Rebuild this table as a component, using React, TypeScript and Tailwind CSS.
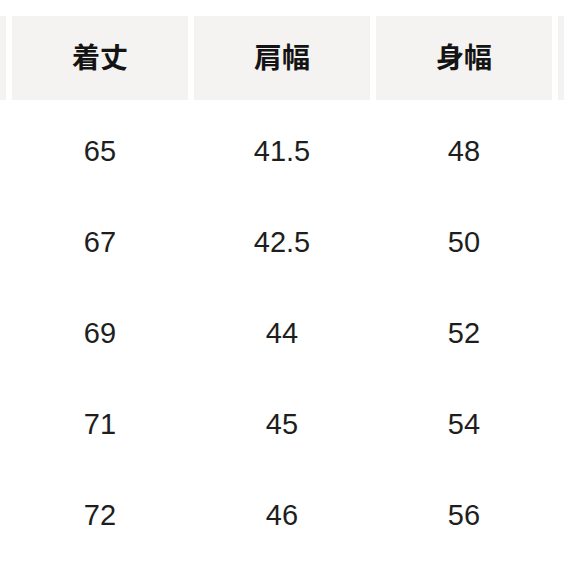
import React from "react";

const headers = ["", "着丈", "肩幅", "身幅", ""];

const rows = [
  ["", "65", "41.5", "48", ""],
  ["", "67", "42.5", "50", ""],
  ["", "69", "44", "52", ""],
  ["", "71", "45", "54", ""],
  ["", "72", "46", "56", ""],
];

const App: React.FC = () => {
  return (
    <div
      className="w-[564px] h-[564px] overflow-hidden bg-white pt-[16px]"
      style={{ fontFamily: '"Liberation Sans", "Noto Sans CJK JP", sans-serif' }}
    >
      <div className="ml-[-170px] flex flex-col gap-[6px]">
        {/* header row */}
        <div className="flex gap-[6px]">
          {headers.map((h, i) => (
            <div
              key={i}
              className="w-[176px] h-[84px] shrink-0 bg-[#f4f3f2] flex items-center justify-center pt-[2px] text-[28px] font-bold text-[#141414]"
            >
              {h}
            </div>
          ))}
        </div>
        {/* body */}
        <div className="flex flex-col">
          {rows.map((r, ri) => (
            <div key={ri} className="flex gap-[6px]">
              {r.map((c, ci) => (
                <div
                  key={ci}
                  className="w-[176px] h-[91px] shrink-0 flex items-center justify-center text-[29px] text-[#1e1e1e]"
                >
                  {c}
                </div>
              ))}
            </div>
          ))}
        </div>
      </div>
    </div>
  );
};

export default App;
